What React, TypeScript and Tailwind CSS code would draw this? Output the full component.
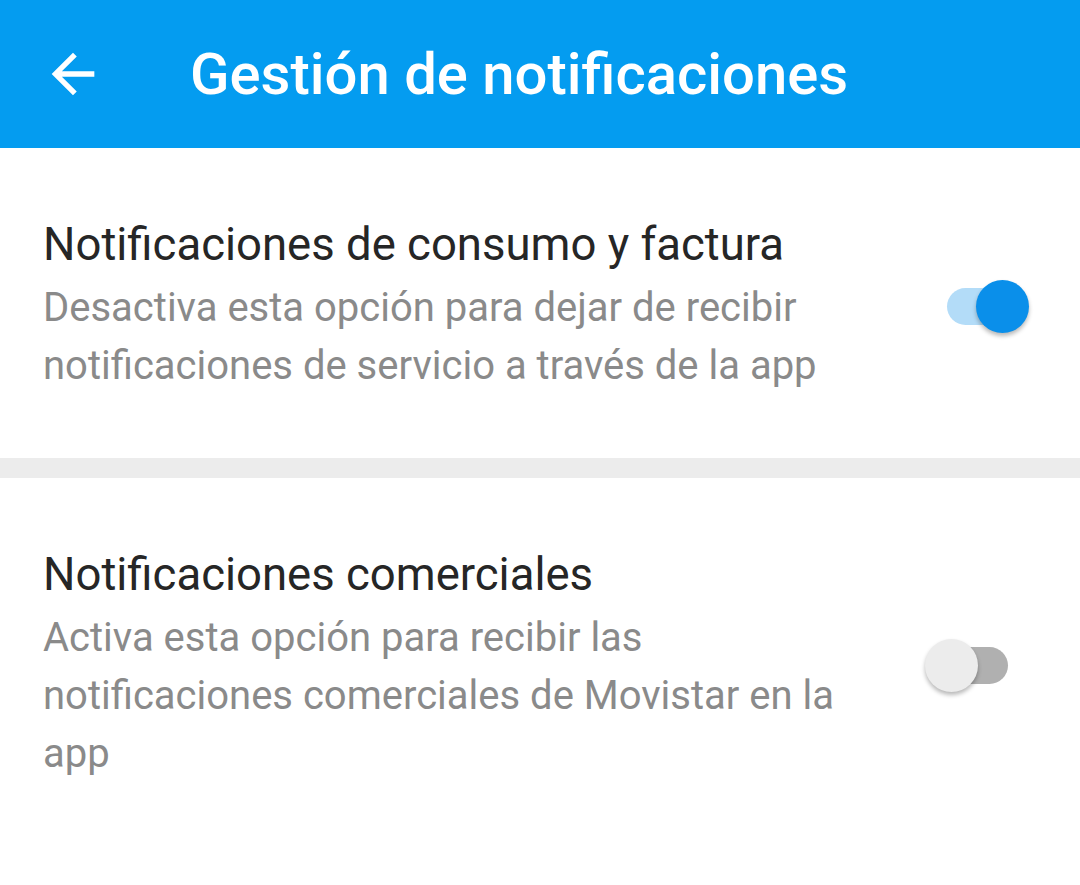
import React from "react";

function BackArrow() {
  return (
    <svg width="64" height="64" viewBox="0 0 24 24" fill="#ffffff" aria-hidden="true">
      <path d="M20 11H7.83l5.59-5.59L12 4l-8 8 8 8 1.41-1.41L7.83 13H20v-2z" />
    </svg>
  );
}

function Toggle({ on }: { on: boolean }) {
  return (
    <div className="relative h-[53px] w-[104px] shrink-0">
      <div
        className={
          "absolute left-[22px] top-[8px] h-[37px] w-[61px] rounded-full " +
          (on ? "bg-[#b3dcf8]" : "bg-[#b0b0b0]")
        }
      />
      <div
        className={
          "absolute top-0 h-[53px] w-[53px] rounded-full shadow-[0_3px_4px_rgba(0,0,0,0.28)] " +
          (on ? "left-[51px] bg-[#0a8fea]" : "left-0 bg-[#ececec]")
        }
      />
    </div>
  );
}

function SettingRow({
  title,
  description,
  on,
}: {
  title: string;
  description: string;
  on: boolean;
}) {
  return (
    <div className="flex items-center justify-between pl-[43px] pr-[51px] pt-[69px] pb-[63px]">
      <div className="w-[830px] shrink-0">
        <div className="text-[45.5px] leading-[56px] text-[#262626]">{title}</div>
        <div className="mt-[6px] text-[40px] leading-[58px] text-[#8a8a8a]">{description}</div>
      </div>
      <Toggle on={on} />
    </div>
  );
}

export default function App() {
  return (
    <div
      className="flex h-[885px] w-[1080px] flex-col overflow-hidden bg-white"
      style={{ fontFamily: "Roboto, 'Noto Sans', sans-serif" }}
    >
      <header className="flex h-[148px] shrink-0 items-center bg-[#049cf0]">
        <div className="ml-[41px] mr-[85px] flex">
          <BackArrow />
        </div>
        <h1 className="text-[58px] font-medium leading-none text-white">Gestión de notificaciones</h1>
      </header>

      <SettingRow
        title="Notificaciones de consumo y factura"
        description="Desactiva esta opción para dejar de recibir notificaciones de servicio a través de la app"
        on={true}
      />

      <div className="h-[20px] shrink-0 bg-[#ececec]" />

      <SettingRow
        title="Notificaciones comerciales"
        description="Activa esta opción para recibir las notificaciones comerciales de Movistar en la app"
        on={false}
      />
    </div>
  );
}
